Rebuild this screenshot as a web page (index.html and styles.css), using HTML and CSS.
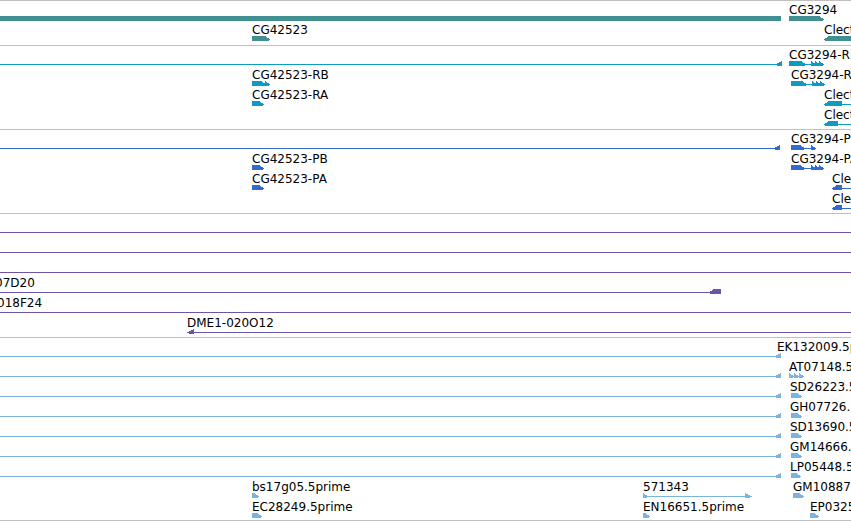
FILE: index.html
```html
<!DOCTYPE html>
<html lang="en">
<head>
    <meta charset="UTF-8">
    <title>Track view</title>
    <link rel="stylesheet" href="styles.css">
</head>
<body>
    <div class="browser" id="browser"></div>

    <script>
        // each row: labels [text, x] and shapes [type, from, to]
        const tracks = [
            { cls: 'genes', rows: [
                { labels: [['CG3294', 789]], shapes: [['bar', 0, 781], ['exon', 789, 824]] },
                { labels: [['CG42523', 252], ['Clect27', 824]], shapes: [['exon', 252, 270], ['rexon', 824, 851]] }
            ]},
            { cls: 'transcripts', rows: [
                { labels: [['CG3294-RB', 789]], shapes: [['line', 0, 776], ['lhead', 775], ['exon', 789, 806], ['line', 805, 823], ['chev', 811], ['chev', 815], ['chev', 819]] },
                { labels: [['CG42523-RB', 252], ['CG3294-RA', 791]], shapes: [['exon', 252, 266], ['chev', 265], ['exon', 791, 807], ['line', 806, 823], ['chev', 812], ['chev', 816], ['chev', 820]] },
                { labels: [['CG42523-RA', 252], ['Clect27-RA', 824]], shapes: [['exon', 252, 264], ['rexon', 824, 842], ['line', 842, 851]] },
                { labels: [['Clect27-RB', 824]], shapes: [['rexon', 824, 838], ['line', 838, 851]] }
            ]},
            { cls: 'proteins', rows: [
                { labels: [['CG3294-PB', 791]], shapes: [['line', 0, 774], ['lhead', 773], ['exon', 791, 805], ['line', 804, 815], ['chev', 811]] },
                { labels: [['CG42523-PB', 252], ['CG3294-PA', 791]], shapes: [['exon', 252, 264], ['exon', 791, 805], ['line', 804, 823], ['chev', 811], ['chev', 815], ['chev', 819]] },
                { labels: [['CG42523-PA', 252], ['Clect27-PA', 832]], shapes: [['exon', 252, 264], ['rexon', 832, 842], ['line', 842, 851]] },
                { labels: [['Clect27-PB', 832]], shapes: [['rexon', 832, 842], ['line', 842, 851]] }
            ]},
            { cls: 'clones', rows: [
                { labels: [], shapes: [['line', 0, 851]] },
                { labels: [], shapes: [['line', 0, 851]] },
                { labels: [], shapes: [['line', 0, 851]] },
                { labels: [['07D20', -5]], shapes: [['line', 0, 712], ['rexon', 709, 721]] },
                { labels: [['018F24', -3]], shapes: [['line', 0, 851]] },
                { labels: [['DME1-020O12', 187]], shapes: [['line', 192, 851], ['lhead', 187]] }
            ]},
            { cls: 'ests', rows: [
                { labels: [['EK132009.5prime', 777]], shapes: [['line', 0, 775], ['lhead', 774]] },
                { labels: [['AT07148.5prime', 789]], shapes: [['line', 0, 775], ['lhead', 774], ['chev', 789], ['chev', 794], ['chev', 799]] },
                { labels: [['SD26223.5prime', 790]], shapes: [['line', 0, 775], ['lhead', 774], ['exon', 791, 802]] },
                { labels: [['GH07726.5prime', 790]], shapes: [['line', 0, 775], ['lhead', 774], ['exon', 791, 802]] },
                { labels: [['SD13690.5prime', 790]], shapes: [['line', 0, 775], ['lhead', 774], ['exon', 791, 802]] },
                { labels: [['GM14666.5prime', 790]], shapes: [['line', 0, 775], ['lhead', 774], ['exon', 791, 802]] },
                { labels: [['LP05448.5prime', 790]], shapes: [['line', 0, 775], ['lhead', 774], ['exon', 791, 801]] },
                { labels: [['bs17g05.5prime', 252], ['571343', 643], ['GM10887.5prime', 793]], shapes: [['exon', 252, 259], ['line', 643, 748], ['chev', 643], ['rhead', 745], ['exon', 793, 804]] },
                { labels: [['EC28249.5prime', 252], ['EN16651.5prime', 643], ['EP0325.5prime', 810]], shapes: [['exon', 252, 262], ['exon', 643, 650], ['exon', 810, 819]] }
            ]}
        ];

        function shape(s) {
            const [type, a, b] = s;
            switch (type) {
                case 'line': return `<rect x="${a}" y="18" width="${b - a}" height="1"/>`;
                case 'bar': return `<rect x="${a}" y="15" width="${b - a}" height="6"/>`;
                case 'exon': return `<polygon points="${a},15 ${b - 5},15 ${b},18.5 ${b - 5},22 ${a},22"/>`;
                case 'rexon': return `<polygon points="${a},18.5 ${a + 5},15 ${b},15 ${b},22 ${a + 5},22"/>`;
                case 'lhead': return `<polygon points="${a},18.5 ${a + 7},15 ${a + 7},22"/>`;
                case 'rhead': return `<polygon points="${a},15 ${a + 7},18.5 ${a},22"/>`;
                case 'chev': return `<polygon points="${a},15 ${a + 5},18.5 ${a},22"/>`;
            }
            return '';
        }

        const browser = document.getElementById('browser');
        tracks.forEach(track => {
            const trackDiv = document.createElement('div');
            trackDiv.classList.add('track', 'track-' + track.cls);
            track.rows.forEach(row => {
                const rowDiv = document.createElement('div');
                rowDiv.classList.add('row');
                let html = `<svg width="851" height="20" shape-rendering="crispEdges">${row.shapes.map(shape).join('')}</svg>`;
                row.labels.forEach(([text, x]) => {
                    html += `<span class="label" style="left:${x}px">${text}</span>`;
                });
                rowDiv.innerHTML = html;
                trackDiv.appendChild(rowDiv);
            });
            browser.appendChild(trackDiv);
        });
    </script>
</body>
</html>
```

FILE: styles.css
```css
body {
    margin: 0;
    background: #fff;
    font-family: "DejaVu Sans", sans-serif;
    font-size: 12px;
    color: #000;
    overflow: hidden;
}
.browser {
    width: 851px;
}
.track {
    border-top: 1px solid #c0c0c0;
    overflow: hidden;
    padding-bottom: 3px;
}
.track-genes {
    padding-bottom: 4px;
}
.track-ests {
    padding-bottom: 2px;
    border-bottom: 1px solid #c0c0c0;
}
.row {
    position: relative;
    height: 20px;
}
.row svg {
    position: absolute;
    left: 0;
    top: 0;
}
.label {
    position: absolute;
    top: 2px;
    line-height: 14px;
    white-space: nowrap;
}
.track-genes svg { fill: #418f91; }
.track-transcripts svg { fill: #0e9bc1; }
.track-proteins svg { fill: #3469d0; }
.track-clones svg { fill: #6c54a7; }
.track-ests svg { fill: #7db4df; }
```
